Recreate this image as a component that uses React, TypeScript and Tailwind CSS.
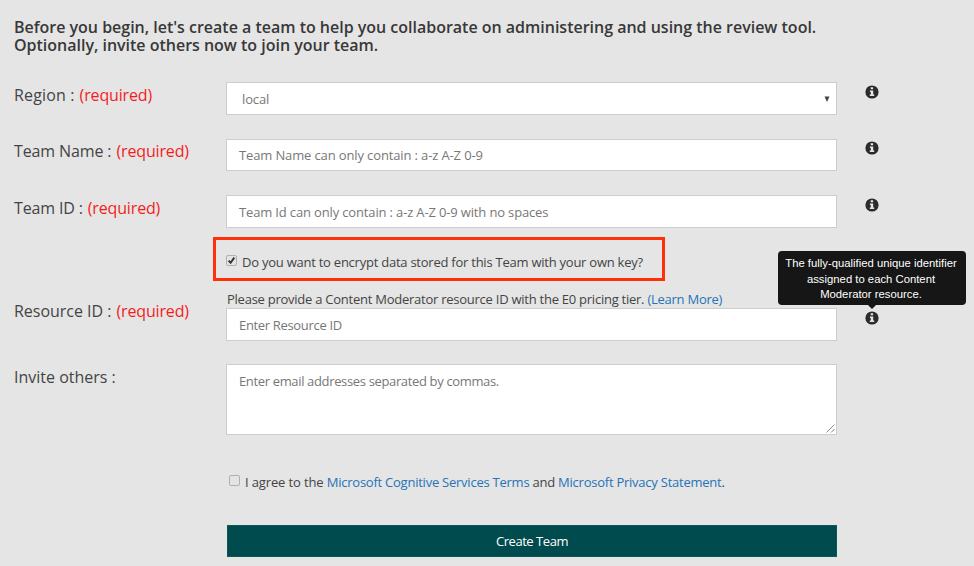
import type { ReactNode } from "react";

const INK = "text-[#444]";

function InfoIcon() {
  return (
    <svg width="14" height="14" viewBox="0 0 14 14" className="block" aria-label="info">
      <circle cx="7" cy="7" r="6.6" fill="#2b2b2b" />
      <path d="M5.7 2.3h2.4v2H5.7zM4.9 5.4h3.3v4.2h1v1.5H4.8V9.6h1V6.900h-.9z" fill="#e5e5e5" />
    </svg>
  );
}

function Label({ text, required = false, className = "" }: { text: string; required?: boolean; className?: string }) {
  return (
    <div className={`w-[212px] shrink-0 whitespace-nowrap text-[16px] leading-[22px] ${INK} ${className}`}>
      {text}
      {required && <span className="pl-px tracking-[-0.15px] text-[#f31d1d]"> (required)</span>}
    </div>
  );
}

function Box({ children, className = "" }: { children: ReactNode; className?: string }) {
  return (
    <div
      className={`flex w-[611px] shrink-0 whitespace-nowrap border border-[#cdcdcd] bg-white text-[13px] text-[#777] ${className}`}
    >
      {children}
    </div>
  );
}

export default function App() {
  return (
    <div className="h-[566px] w-[974px] overflow-hidden bg-[#e5e5e5] pl-[14px] pt-[18px] font-['Open_Sans','Noto_Sans',sans-serif]">
      <h1 className="whitespace-nowrap text-[16px] font-semibold leading-[18px] tracking-[-0.01px] text-[#383838]">
        Before you begin, let's create a team to help you collaborate on administering and using the review tool.
        <br />
        Optionally, invite others now to join your team.
      </h1>

      <div className="mt-[28px] flex h-[33px] items-start">
        <Label text="Region :" required className="pt-[2px] tracking-[0.15px]" />
        <Box className="h-[33px] items-center justify-between pl-[15px] pr-[6px] tracking-[-0.15px]">
          <span className="pt-[2px]">local</span>
          <svg width="6" height="6" viewBox="0 0 6 6" className="block">
            <path d="M.5 .5h5L3 6z" fill="#444" />
          </svg>
        </Box>
        <div className="pl-[28px] pt-[3px]"><InfoIcon /></div>
      </div>

      <div className="mt-[24px] flex h-[33px] items-start">
        <Label text="Team Name :" required className="pt-[1px] tracking-[-0.12px]" />
        <Box className="h-[32px] items-center pl-[12px] tracking-[-0.13px]">
          <span className="pt-[2px]">Team Name can only contain : a-z A-Z 0-9</span>
        </Box>
        <div className="pl-[28px] pt-[2px]"><InfoIcon /></div>
      </div>

      <div className="mt-[23px] flex h-[33px] items-start">
        <Label text="Team ID :" required className="pt-[2px] tracking-[-0.15px]" />
        <Box className="h-[33px] items-center pl-[12px] tracking-[-0.15px]">
          <span className="pt-[2px]">Team Id can only contain : a-z A-Z 0-9 with no spaces</span>
        </Box>
        <div className="pl-[28px] pt-[3px]"><InfoIcon /></div>
      </div>

      <div className="ml-[199px] mt-[9px] flex h-[44px] w-[452px] items-center whitespace-nowrap border-[3px] border-[#fd300a] pl-[10px] pt-[6px]">
        <svg width="11" height="11" viewBox="0 0 11 11" className="mb-[4px] block">
          <rect x=".5" y=".5" width="10" height="10" rx="1.5" fill="#e4e4e4" stroke="#b0b0b0" />
          <path d="M2.6 5.6l2 2.2 3.7-5.2" fill="none" stroke="#333" strokeWidth="1.9" />
        </svg>
        <span className={`pl-[5px] pt-[2px] text-[13px] tracking-[-0.24px] ${INK}`}>
          Do you want to encrypt data stored for this Team with your own key?
        </span>
      </div>

      <div className="mt-[9px] flex h-[51px] items-start">
        <Label text="Resource ID :" required className="pt-[10px] tracking-[-0.02px]" />
        <div className="w-[611px] shrink-0">
          <div className={`h-[18px] whitespace-nowrap pl-[1px] text-[13px] leading-[18px] tracking-[-0.25px] ${INK}`}>
            Please provide a Content Moderator resource ID with the E0 pricing tier.{" "}
            <a className="text-[#2673b8]">(Learn More)</a>
          </div>
          <Box className="h-[33px] items-center pl-[12px] tracking-[-0.33px]">
            <span className="pt-[2px]">Enter Resource ID</span>
          </Box>
        </div>
        <div className="relative pl-[28px] pt-[21px]">
          <InfoIcon />
          <div className="absolute -left-[59px] -top-[39px] h-[54px] w-[188px] rounded-[4px] bg-[#161616] pr-[2px] pt-[5px] text-center font-['Liberation_Sans',Arial,sans-serif] text-[11.3px] leading-[15.700px] text-white">
            <div className="whitespace-nowrap">The fully-qualified unique identifier</div>
            <div>assigned to each Content</div>
            <div>Moderator resource.</div>
            <svg width="10" height="5" viewBox="0 0 10 5" className="absolute left-[89px] top-[53px]">
              <path d="M0 0h10L5 5z" fill="#161616" />
            </svg>
          </div>
        </div>
      </div>

      <div className="mt-[23px] flex h-[71px] items-start">
        <Label text="Invite others :" className="pt-[2px] tracking-[0px]" />
        <Box className="h-[71px] justify-between pl-[12px] tracking-[-0.35px]">
          <span className="pt-[7px]">Enter email addresses separated by commas.</span>
          <svg width="9" height="9" viewBox="0 0 9 9" className="mb-[1px] mr-[1px] block self-end">
            <path d="M.5 8.5l8-8M5 8.5L8.500 5" stroke="#888" fill="none" />
          </svg>
        </Box>
      </div>

      <div className={`ml-[215px] mt-[37px] flex h-[20px] items-center whitespace-nowrap text-[13px] ${INK}`}>
        <svg width="11" height="11" viewBox="0 0 11 11" className="mb-[3px] block">
          <rect x=".5" y=".5" width="10" height="10" rx="1.5" fill="#e4e4e4" stroke="#b0b0b0" />
        </svg>
        <span className="pl-[5px] pt-[2px] tracking-[-0.24px]">
          <span className="tracking-[-0.13px]">I agree to the </span>
          <a className="text-[#2673b8]">Microsoft Cognitive Services Terms</a> and{" "}
          <a className="text-[#2673b8]">Microsoft Privacy Statement</a>.
        </span>
      </div>

      <button className="ml-[213px] mt-[33px] flex h-[32px] w-[610px] items-center justify-center border border-[#0e5658] bg-[#004b4e] pt-[2px] text-[13px] tracking-[-0.45px] text-white">
        Create Team
      </button>
    </div>
  );
}
